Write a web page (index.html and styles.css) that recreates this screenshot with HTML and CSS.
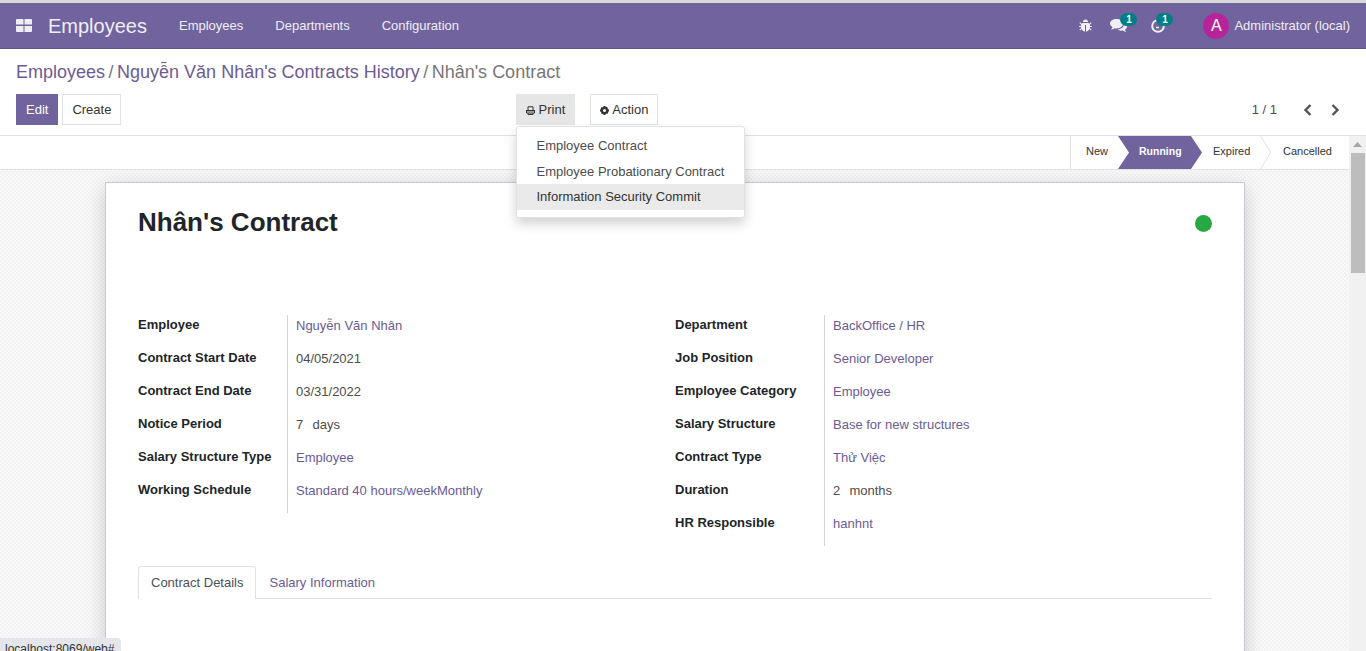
FILE: index.html
```html
<!DOCTYPE html>
<html lang="en">
<head>
    <meta charset="UTF-8">
    <title>Nhân's Contract - Odoo</title>
    <link rel="stylesheet" href="styles.css">
</head>
<body>
    <div class="topstrip"></div>
    <nav class="navbar">
        <svg class="apps-icon" width="16" height="14" viewBox="0 0 16 14"><path fill="#f0eef5" d="M1 0h5.500a1 1 0 0 1 1 1v4.500h-7.500V1a1 1 0 0 1 1-1zM8.500 0H15a1 1 0 0 1 1 1v4.500H8.500zM0 7h7.500v6H1a1 1 0 0 1-1-1zM8.500 7H16v5a1 1 0 0 1-1 1H8.500z"/></svg>
        <span class="brand">Employees</span>
        <a class="nav-link">Employees</a>
        <a class="nav-link">Departments</a>
        <a class="nav-link">Configuration</a>
        <div class="nav-right">
            <svg class="bug" width="13" height="13" viewBox="0 0 13 13"><path fill="#f0eef5" d="M4 3a2.500 2.500 0 0 1 5 0zM3.500 4h6l.8.8 1.600-1.500.7.700-1.700 1.700V7h2v1h-2v1l1.700 1.700-.7.700-1.500-1.500C9.500 11.700 8 12.500 7 12.500V6H6v6.500c-1 0-2.500-.8-3.400-2.600L1.100 11.400.4 10.700 2.100 9V8h-2V7h2V5.700L.4 4 1.100 3.300 2.700 4.800z"/></svg>
            <span class="systray-item chat">
                <svg width="17" height="14" viewBox="0 0 17 14"><path fill="#f0eef5" d="M6.500 0C10 0 13 2 13 4.700s-3 4.700-6.500 4.700c-.6 0-1.200 0-1.700-.2C3.600 10 2.300 10.400 .8 10.600c1-.9 1.600-1.800 1.700-2.700C1 7 0 5.900 0 4.700 0 2 3 0 6.500 0z"/><path fill="#f0eef5" d="M14 4.200c1.800.8 3 2 3 3.600 0 1.200-.8 2.200-2 2.900.1.900.6 1.600 1.400 2.400-1.300-.2-2.500-.6-3.500-1.500-2 .3-4-.2-5.200-1.400 3.600 0 6.600-2.300 6.300-6z"/></svg>
                <span class="badge">1</span>
            </span>
            <span class="systray-item clock">
                <svg width="14" height="14" viewBox="0 0 14 14"><path fill="none" stroke="#f0eef5" stroke-width="2" d="M7 1.200A5.800 5.800 0 1 0 12.800 7"/><path fill="none" stroke="#f0eef5" stroke-width="1.500" d="M5 8.500h3"/></svg>
                <span class="badge">1</span>
            </span>
            <span class="avatar">A</span>
            <span class="user-name">Administrator (local)</span>
        </div>
    </nav>

    <div class="control-panel">
        <div class="breadcrumb">
            <a>Employees</a><span class="sep">/</span><a>Nguyễn Văn Nhân's Contracts History</a><span class="sep">/</span><span class="current">Nhân's Contract</span>
        </div>
        <div class="cp-row">
            <div class="cp-left">
                <button class="btn btn-primary">Edit</button>
                <button class="btn btn-default">Create</button>
            </div>
            <div class="cp-middle">
                <div class="dropdown">
                    <button class="btn btn-open">
                        <svg width="9" height="9" viewBox="0 0 9 9"><path fill="none" stroke="#333" d="M2 4V.8h5V4M.5 5v2h8V5M2 7v1.500h5V7"/><path fill="#333" d="M0 4h9v1.400H0z"/></svg>
                        Print
                    </button>
                    <div class="dropdown-menu">
                        <a class="dropdown-item">Employee Contract</a>
                        <a class="dropdown-item">Employee Probationary Contract</a>
                        <a class="dropdown-item active">Information Security Commit</a>
                    </div>
                </div>
                <button class="btn btn-default btn-action">
                    <svg width="9" height="9" viewBox="0 0 10 10"><path fill="#333" fill-rule="evenodd" d="M4 0h2l.3 1.400 1.200-.7 1.400 1.400-.7 1.200L10 4v2l-1.400.3.700 1.200-1.400 1.400-1.200-.7L6 10H4l-.3-1.400-1.200.7L1 7.900l.7-1.200L0 6V4l1.400-.3-.7-1.200L2.100 1l1.200.7zM5 3.300a1.700 1.700 0 1 0 0 3.400 1.700 1.700 0 0 0 0-3.400z"/></svg>
                    Action
                </button>
            </div>
            <div class="cp-right">
                <span class="pager">1 / 1</span>
                <svg class="chev" width="9" height="12" viewBox="0 0 9 12"><path fill="none" stroke="#555" stroke-width="2.400" d="M7.500 1L2.500 6l5 5"/></svg>
                <svg class="chev" width="9" height="12" viewBox="0 0 9 12"><path fill="none" stroke="#555" stroke-width="2.400" d="M1.500 1l5 5-5 5"/></svg>
            </div>
        </div>
    </div>

    <div class="main">
        <div class="content">
            <div class="statusbar">
                <div class="steps">
                    <span class="step step-new">New</span>
                    <span class="step step-running">Running</span>
                    <span class="step step-expired">Expired</span>
                    <span class="step step-cancelled">Cancelled</span>
                </div>
            </div>
            <div class="sheet-bg">
                <div class="sheet">
                    <div class="title-row">
                        <h1>Nhân's Contract</h1>
                        <span class="kanban-dot"></span>
                    </div>
                    <div class="groups">
                        <div class="group">
                            <div class="row"><label>Employee</label><a>Nguyễn Văn Nhân</a></div>
                            <div class="row"><label>Contract Start Date</label><span>04/05/2021</span></div>
                            <div class="row"><label>Contract End Date</label><span>03/31/2022</span></div>
                            <div class="row"><label>Notice Period</label><span>7&nbsp;&nbsp;days</span></div>
                            <div class="row"><label>Salary Structure Type</label><a>Employee</a></div>
                            <div class="row"><label>Working Schedule</label><a>Standard 40 hours/weekMonthly</a></div>
                        </div>
                        <div class="group">
                            <div class="row"><label>Department</label><a>BackOffice / HR</a></div>
                            <div class="row"><label>Job Position</label><a>Senior Developer</a></div>
                            <div class="row"><label>Employee Category</label><a>Employee</a></div>
                            <div class="row"><label>Salary Structure</label><a>Base for new structures</a></div>
                            <div class="row"><label>Contract Type</label><a>Thử Việc</a></div>
                            <div class="row"><label>Duration</label><span>2&nbsp;&nbsp;months</span></div>
                            <div class="row"><label>HR Responsible</label><a>hanhnt</a></div>
                        </div>
                    </div>
                    <div class="tabs">
                        <a class="tab active">Contract Details</a>
                        <a class="tab">Salary Information</a>
                    </div>
                </div>
            </div>
        </div>
        <div class="scrollbar">
            <svg width="9" height="5" viewBox="0 0 9 5"><path fill="#a6a6a6" d="M4.500 0L9 5H0z"/></svg>
            <div class="thumb"></div>
        </div>
    </div>

    <div class="url-tip">localhost:8069/web#</div>
</body>
</html>
```

FILE: styles.css
```css
* {
    box-sizing: border-box;
}
html, body {
    height: 100%;
}
body {
    margin: 0;
    height: 651px;
    overflow: hidden;
    display: flex;
    flex-direction: column;
    font-family: "Liberation Sans", Arial, sans-serif;
    font-size: 13px;
    color: #4c4c4c;
    background: #fff;
}
a {
    color: #6b5b95;
}
.topstrip {
    height: 3px;
    background: #d9d9d9;
    flex: none;
}

/* navbar */
.navbar {
    height: 46px;
    flex: none;
    display: flex;
    align-items: center;
    background: #71639e;
    border-bottom: 1px solid #5f5387;
    color: #f0eef5;
    padding-left: 16px;
}
.apps-icon {
    margin-right: 16px;
}
.brand {
    font-size: 20px;
    width: 131px;
    padding-top: 2px;
}
.nav-link {
    color: #f0eef5;
    font-size: 13px;
    margin-right: 32px;
}
.nav-right {
    margin-left: auto;
    display: flex;
    align-items: center;
    padding-right: 16px;
}
.bug {
    margin-right: 18px;
}
.systray-item {
    position: relative;
    display: flex;
    width: 17px;
}
.chat {
    margin-right: 24px;
}
.clock {
    width: 14px;
    margin-right: 38px;
}
.badge {
    position: absolute;
    top: -6px;
    left: 10px;
    width: 17px;
    height: 13px;
    border-radius: 7px;
    background: #017e84;
    color: #fff;
    font-size: 10px;
    font-weight: 700;
    line-height: 13px;
    text-align: center;
}
.clock .badge {
    left: 5px;
}
.avatar {
    width: 26px;
    height: 26px;
    border-radius: 50%;
    background: #b7249a;
    color: #fff;
    font-size: 16px;
    line-height: 26px;
    text-align: center;
    margin-right: 5px;
}
.user-name {
    font-size: 13px;
}

/* control panel */
.control-panel {
    height: 87px;
    flex: none;
    padding: 12px 16px 0;
    border-bottom: 1px solid #dee2e6;
}
.breadcrumb {
    font-size: 18px;
    line-height: 22px;
}
.sep {
    color: #777;
    padding: 0 3.500px;
}
.current {
    color: #777;
}
.cp-row {
    display: flex;
    margin-top: 11px;
    position: relative;
}
.cp-left {
    width: 500px;
    display: flex;
    gap: 4px;
}
.cp-middle {
    display: flex;
    gap: 15px;
}
.cp-right {
    margin-left: auto;
    display: flex;
    align-items: center;
    padding: 0 10px 0 0;
    color: #4c4c4c;
}
.pager {
    margin-right: 26px;
}
.chev {
    margin-right: 19px;
}
.chev:last-child {
    margin-right: 0;
}
.btn {
    height: 31px;
    font: inherit;
    font-size: 13px;
    padding: 0 9px;
    border: 1px solid transparent;
    background: #fff;
    color: #333;
}
.btn svg {
    vertical-align: -1px;
}
.btn-primary {
    background: #71639e;
    color: #fff;
    border-color: #71639e;
}
.btn-default {
    border-color: #dee2e6;
}
.btn-open {
    background: #e6e6e6;
    border-color: #e6e6e6;
}
.dropdown {
    position: relative;
}
.dropdown-menu {
    position: absolute;
    top: 32px;
    left: 0;
    width: 229px;
    padding: 6px 0 7px;
    background: #fff;
    border: 1px solid #dee2e6;
    border-radius: 3px;
    box-shadow: 0 6px 12px rgba(0, 0, 0, 0.175);
    z-index: 5;
}
.dropdown-item {
    display: block;
    height: 25.500px;
    line-height: 25px;
    padding-left: 19.500px;
    color: #4c4c4c;
    white-space: nowrap;
}
.dropdown-item.active {
    background: #eaeaea;
    color: #333;
}

/* main area */
.main {
    flex: 1;
    display: flex;
    min-height: 0;
}
.content {
    flex: 1;
    min-width: 0;
    display: flex;
    flex-direction: column;
}
.statusbar {
    height: 34px;
    flex: none;
    display: flex;
    justify-content: flex-end;
    border-bottom: 1px solid #dee2e6;
    background: #fff;
}
.steps {
    display: flex;
    font-size: 11px;
    color: #333;
    border-left: 1px solid #dee2e6;
}
.step {
    display: flex;
    align-items: center;
    height: 33px;
    padding-bottom: 4px;
}
.step-new {
    width: 47px;
    padding-left: 15px;
}
.step-running {
    width: 84px;
    padding-left: 21px;
    font-weight: 700;
    font-size: 10.500px;
    color: #fff;
    background: #71639e;
    clip-path: polygon(0 0, 73px 0, 84px 50%, 73px 100%, 0 100%, 11px 50%);
}
.step-expired {
    width: 58px;
    padding-left: 11px;
}
.step-cancelled {
    width: 89px;
    padding-left: 23px;
    position: relative;
}
.step-cancelled::before {
    content: "";
    position: absolute;
    left: 0;
    top: 0;
    width: 11px;
    height: 33px;
    background: #dee2e6;
    clip-path: polygon(0 0, 1px 0, 11px 50%, 1px 100%, 0 100%, 10px 50%);
}
.sheet-bg {
    flex: 1;
    min-height: 0;
    overflow: hidden;
    padding: 12px 104px 0 105px;
    background-color: #fafafa;
    background-image: conic-gradient(#f2f2f2 25%, #fafafa 0 50%, #f2f2f2 0 75%, #fafafa 0);
    background-size: 4px 4px;
}
.sheet {
    height: 600px;
    background: #fff;
    border: 1px solid #c9c8d4;
    padding: 0 32px;
    box-shadow: 0 5px 20px -1px rgba(0, 0, 0, 0.2);
}
.title-row {
    display: flex;
    justify-content: space-between;
    align-items: center;
    height: 79px;
    margin-bottom: 53px;
}
h1 {
    margin: 0;
    font-size: 26px;
    font-weight: 700;
    color: #212529;
}
.kanban-dot {
    width: 17px;
    height: 17px;
    margin-top: 2px;
    border-radius: 50%;
    background: #28a745;
}
.groups {
    display: flex;
}
.group {
    flex: 1;
}
.row {
    display: flex;
    height: 33px;
    line-height: 22px;
}
.row label {
    width: 150px;
    height: 33px;
    line-height: 20px;
    font-weight: 700;
    color: #212529;
    border-right: 1px solid #ced4da;
    flex: none;
}
.row a, .row span {
    padding-left: 8px;
}
.row span {
    color: #4c4c4c;
    word-spacing: 1px;
}
.tabs {
    display: flex;
    margin-top: 20px;
    border-bottom: 1px solid #dee2e6;
    height: 33px;
}
.tab {
    height: 33px;
    line-height: 32px;
    padding: 0 12px;
    border: 1px solid transparent;
    border-bottom: 0;
    border-radius: 3px 3px 0 0;
}
.tab.active {
    color: #495057;
    background: #fff;
    border-color: #dee2e6;
}
.scrollbar {
    width: 17px;
    flex: none;
    background: #f1f1f1;
    display: flex;
    flex-direction: column;
    align-items: center;
    padding-top: 6px;
}
.thumb {
    width: 14px;
    height: 120px;
    margin-top: 6px;
    background: #bdbdbd;
}
.url-tip {
    position: absolute;
    left: 0;
    top: 638px;
    height: 13px;
    padding: 4px 7px 0 5px;
    background: #e4e6ea;
    border-radius: 0 4px 0 0;
    font-size: 12px;
    line-height: 14px;
    color: #333;
    overflow: hidden;
}
```
